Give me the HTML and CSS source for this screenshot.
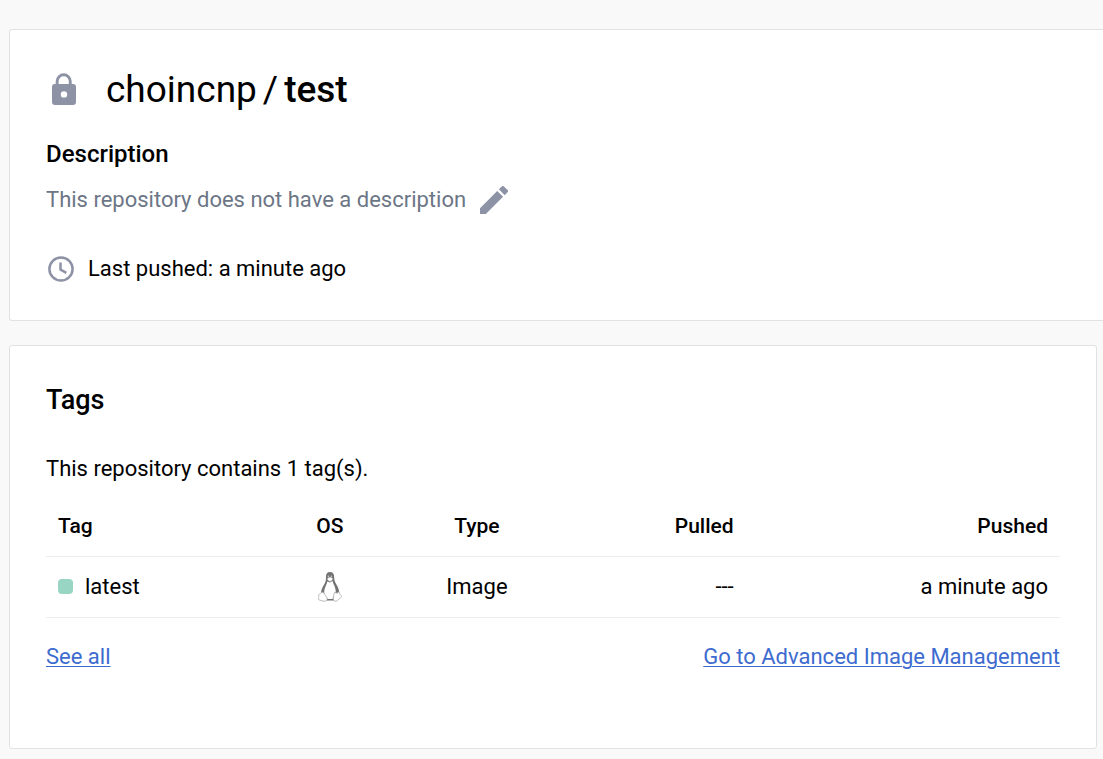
FILE: index.html
```
<!DOCTYPE html>
<html lang="en">
<head>
    <meta charset="UTF-8">
    <meta name="viewport" content="width=device-width, initial-scale=1.0">
    <title>choincnp/test</title>
    <link rel="stylesheet" href="styles.css">
</head>
<body>
    <main class="page">
        <section class="card repo">
            <div class="repo-title">
                <svg class="lock-icon" viewBox="0 0 26 34" aria-hidden="true">
                    <path fill-rule="evenodd" d="M3 11h1.700V8.300a8 8 0 0 1 16 0V11H22a3 3 0 0 1 3 3v15a3 3 0 0 1-3 3H4a3 3 0 0 1-3-3V14a3 3 0 0 1 2-3zM7.600 11h10.200V8.300a5.100 5.100 0 0 0-10.200 0zM13 18.200a3.200 3.200 0 1 0 0 6.400 3.200 3.200 0 0 0 0-6.400z"/>
                </svg>
                <h1><span>choincnp</span> <span>/</span> <strong>test</strong></h1>
            </div>
            <h2>Description</h2>
            <div class="description">
                <span>This repository does not have a description</span>
                <button type="button" class="edit" aria-label="Edit description">
                    <svg viewBox="3 3 18 18" aria-hidden="true">
                        <path d="M3 17.250V21h3.750L17.810 9.940l-3.750-3.750L3 17.250zM20.710 7.040a1 1 0 0 0 0-1.410l-2.340-2.340a1 1 0 0 0-1.410 0l-1.830 1.830 3.750 3.750 1.830-1.830z"/>
                    </svg>
                </button>
            </div>
            <div class="pushed">
                <svg class="clock-icon" viewBox="0 0 26 26" aria-hidden="true">
                    <circle cx="13" cy="13" r="11.600"/>
                    <path d="M12.500 6.500v7l5.800 3.400"/>
                </svg>
                <span>Last pushed: a minute ago</span>
            </div>
        </section>

        <section class="card tags">
            <h2>Tags</h2>
            <p>This repository contains 1 tag(s).</p>
            <table>
                <thead>
                    <tr>
                        <th class="col-tag">Tag</th>
                        <th class="col-os">OS</th>
                        <th class="col-type">Type</th>
                        <th class="col-pulled">Pulled</th>
                        <th class="col-pushed">Pushed</th>
                    </tr>
                </thead>
                <tbody>
                    <tr>
                        <td class="col-tag"><span class="status"></span>latest</td>
                        <td class="col-os">
                            <svg class="linux-icon" viewBox="0 0 24 30" role="img" aria-label="Linux">
                                <path fill="#737373" d="M12 0C9.300 0 7.900 1.800 8 4.500c.1 3.500-.3 5.500-2.200 8.500-1.600 2.500-2.500 5-2.800 7.600L7 28.500h10l4.200-7.300c.2-3-1.200-6-2.800-8.700-1.700-2.800-2.200-4.500-2.300-8C16 1.600 14.700 0 12 0z"/>
                                <path fill="#fff" d="M9.300 9.500c-.4 2.500-2 5-2.700 7.600-.5 1.900-.5 3.600-.1 5.300l2.500 4c2 .9 4.200.9 6.200 0l1.200-5.600 1.400-.8c0-3.200-1.300-6-2.400-8.300L14.500 9 12 10.500z"/>
                                <path fill="#fff" stroke="#aaa" stroke-width=".5" d="M9.300 6.700c.8-.9 1.700-1.400 2.700-1.400s2 .5 2.700 1.400c0 1-1.300 2.500-2.700 2.700-1.400-.2-2.700-1.700-2.700-2.700z"/>
                                <circle fill="#ccc" cx="10.400" cy="4.200" r=".8"/>
                                <circle fill="#ccc" cx="13.400" cy="4.200" r=".8"/>
                                <path fill="#fff" stroke="#aaa" stroke-width=".8" d="M3.900 20.300c1.400-.4 2.300 1 3.100 2.500.9 1.500 2.300 2.700 2.200 4.300-.2 2-2.400 2.600-4.200 1.900-1.500-.6-3-.6-4.200-1.200-.9-.6.1-1.800 0-3.300-.1-1.300-.5-1.800.4-2.200 1.200-.4 1.700-1.700 2.700-2z"/>
                                <path fill="#fff" stroke="#aaa" stroke-width=".8" d="M16.900 20.300c.9 1 2.900 1.100 3.800-.3 1 .2.900 1.500 1.300 2.300.5 1 1.700 1.500 1.600 2.500-.3 1-1.900 1.500-2.900 2.500-1.200 1.200-2.400 2.200-3.900 1.800-1.700-.5-1.500-2.400-1.200-4.100.2-1.800.2-4.200 1.300-4.700z"/>
                            </svg>
                        </td>
                        <td class="col-type">Image</td>
                        <td class="col-pulled">---</td>
                        <td class="col-pushed">a minute ago</td>
                    </tr>
                </tbody>
            </table>
            <div class="links">
                <a href="#">See all</a>
                <a href="#">Go to Advanced Image Management</a>
            </div>
        </section>
    </main>
</body>
</html>
```
FILE: styles.css
```
* {
    box-sizing: border-box;
}
body {
    margin: 0;
    background-color: #f9f9f9;
    color: #000;
    font-family: Roboto, "Liberation Sans", sans-serif;
    font-size: 22px;
    line-height: 24px;
}
h1, h2, p {
    margin: 0;
}
.page {
    display: flex;
    flex-direction: column;
    gap: 24px;
    padding: 29px 0 10px 9px;
}
.card {
    background: #fff;
    border: 1px solid #e1e2e6;
    border-radius: 3px;
}
/* runs to the right edge of the window */
.repo {
    padding: 39px 36px 35px;
    border-right: none;
    border-radius: 3px 0 0 3px;
}
.repo-title {
    display: flex;
    align-items: center;
    gap: 29px;
    padding-left: 5px;
    margin-bottom: 29px;
}
.repo-title h1 {
    display: flex;
    gap: 6px;
    font-size: 37px;
    font-weight: 400;
    line-height: 42px;
}
.repo-title strong {
    font-weight: 500;
}
.lock-icon {
    width: 26px;
    height: 34px;
    fill: #8d93a5;
}
.repo h2 {
    font-size: 24px;
    font-weight: 500;
    line-height: 28px;
    margin-bottom: 16px;
}
.description {
    display: flex;
    align-items: center;
    gap: 14px;
    height: 32px;
    margin-bottom: 37px;
    color: #6c7686;
}
.edit {
    display: flex;
    padding: 0;
    border: none;
    background: none;
    cursor: pointer;
}
.edit svg {
    width: 28px;
    height: 28px;
    fill: #8d93a5;
}
.pushed {
    display: flex;
    align-items: center;
    gap: 14px;
    height: 32px;
    padding-left: 2px;
}
.clock-icon {
    width: 26px;
    height: 26px;
    fill: none;
    stroke: #8d93a5;
    stroke-width: 2.5;
}
.tags {
    margin-right: 6px;
    padding: 38px 36px 79px;
}
.tags h2 {
    font-size: 27px;
    font-weight: 500;
    line-height: 32px;
    margin-bottom: 41px;
}
.tags p {
    margin-bottom: 15px;
}
table {
    width: 100%;
    table-layout: fixed;
    border-collapse: separate;
    border-spacing: 0;
}
th, td {
    height: 61px;
    padding: 0 12px;
    border-bottom: 1px solid #ededed;
    vertical-align: middle;
}
th {
    font-size: 21px;
    font-weight: 500;
}
.col-tag {
    width: 21%;
    text-align: left;
}
.col-os {
    width: 14%;
    text-align: center;
}
.col-type {
    width: 15%;
    text-align: center;
}
.col-pulled {
    width: 19%;
    text-align: right;
}
.col-pushed {
    width: 31%;
    text-align: right;
}
.status {
    display: inline-block;
    width: 15px;
    height: 15px;
    margin-right: 12px;
    border-radius: 4px;
    background: #99d5c3;
}
.linux-icon {
    display: block;
    width: 24px;
    height: 30px;
    margin: 0 auto;
}
.links {
    display: flex;
    justify-content: space-between;
    margin-top: 27px;
}
.links a {
    color: #3d6bcf;
    text-decoration-thickness: 1px;
    text-underline-offset: 2px;
}
```
